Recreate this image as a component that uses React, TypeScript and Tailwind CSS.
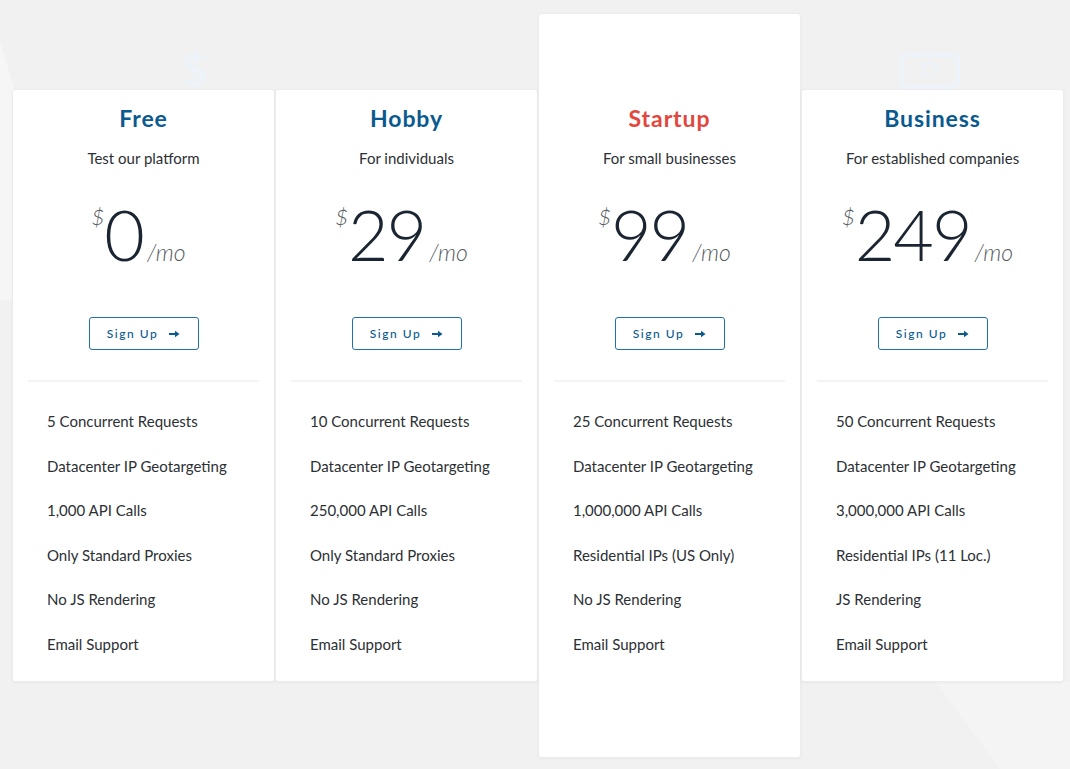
import React from "react";

type Plan = {
  name: string;
  sub: string;
  price: string;
  features: string[];
  featured?: boolean;
};

const plans: Plan[] = [
  {
    name: "Free",
    sub: "Test our platform",
    price: "0",
    features: [
      "5 Concurrent Requests",
      "Datacenter IP Geotargeting",
      "1,000 API Calls",
      "Only Standard Proxies",
      "No JS Rendering",
      "Email Support",
    ],
  },
  {
    name: "Hobby",
    sub: "For individuals",
    price: "29",
    features: [
      "10 Concurrent Requests",
      "Datacenter IP Geotargeting",
      "250,000 API Calls",
      "Only Standard Proxies",
      "No JS Rendering",
      "Email Support",
    ],
  },
  {
    name: "Startup",
    sub: "For small businesses",
    price: "99",
    featured: true,
    features: [
      "25 Concurrent Requests",
      "Datacenter IP Geotargeting",
      "1,000,000 API Calls",
      "Residential IPs (US Only)",
      "No JS Rendering",
      "Email Support",
    ],
  },
  {
    name: "Business",
    sub: "For established companies",
    price: "249",
    features: [
      "50 Concurrent Requests",
      "Datacenter IP Geotargeting",
      "3,000,000 API Calls",
      "Residential IPs (11 Loc.)",
      "JS Rendering",
      "Email Support",
    ],
  },
];

function Arrow() {
  return (
    <svg width="11" height="8" viewBox="0 0 11 8" className="ml-[11px]">
      <path d="M0 4 H7" stroke="#0b5a8f" strokeWidth="2" />
      <path d="M6 0.8 L10.5 4 L6 7.2 Z" fill="#0b5a8f" />
    </svg>
  );
}

function Card({ plan }: { plan: Plan }) {
  return (
    <div
      className={
        plan.featured
          ? "w-[263px] bg-white rounded-[3px] border border-[#ececec] shadow-[0_1px_3px_rgba(0,0,0,0.04)] pt-[90px] pb-[91px]"
          : "w-[263px] mt-[76px] bg-white rounded-[3px] border border-[#ececec] shadow-[0_1px_3px_rgba(0,0,0,0.04)] pt-[14px] pb-[15px]"
      }
    >
      <div className="flex flex-col items-center">
        <div
          className={
            plan.featured
              ? "text-[23px] leading-[28px] font-bold tracking-[0.9px] text-[#e2463d]"
              : "text-[23px] leading-[28px] font-bold tracking-[0.9px] text-[#0b5a8f]"
          }
        >
          {plan.name}
        </div>
        <div className="mt-[16px] text-[15px] leading-[20px] text-[#2c3034]">{plan.sub}</div>
        <div className="mt-[31px] h-[70px] flex items-baseline pr-[10px]">
          <span className="self-start mt-[7px] text-[22px] leading-[22px] italic font-light text-[#555b60]">
            $
          </span>
          <span className="text-[70px] leading-[70px] font-light text-[#1a2531] tracking-[-2px]">
            {plan.price}
          </span>
          <span className="ml-[4px] text-[23px] leading-[24px] italic font-light text-[#555b60]">
            /mo
          </span>
        </div>
        <button className="mt-[48px] w-[110px] h-[33px] flex items-center justify-center rounded-[3px] border border-[#1f72a6] text-[12px] tracking-[1.5px] text-[#0b5a8f] font-medium bg-white">
          Sign Up
          <Arrow />
        </button>
      </div>
      <div className="mx-[15px] mt-[30px] h-[2px] bg-[#f4f4f4]" />
      <ul className="mt-[17px] pl-[34px]">
        {plan.features.map((f) => (
          <li key={f} className="h-[44.5px] flex items-center text-[15px] text-[#2c3034]">
            {f}
          </li>
        ))}
      </ul>
    </div>
  );
}

export default function App() {
  return (
    <div
      className="relative w-full h-[769px] overflow-hidden bg-[#f1f1f1]"
      style={{ fontFamily: "Lato, 'Noto Sans', sans-serif" }}
    >
      <svg className="absolute inset-0" width="1070" height="769" viewBox="0 0 1070 769">
        <polygon points="0,40 0,300 30,300 60,250" fill="#f6f6f6" />
        <polygon points="1165,681 1330,769 1070,769 930,681" fill="#f3f3f3" opacity="0.6" />
        <polygon points="935,681 1000,769 1070,769 1070,681" fill="#f4f4f4" />
        <text x="182" y="86" fontSize="44" fill="#edf3f8" fontFamily="Lato, sans-serif" fontWeight="700">
          $
        </text>
        <rect x="902" y="55" width="56" height="32" rx="4" fill="none" stroke="#edf3f8" strokeWidth="5" />
        <circle cx="930" cy="70" r="7" fill="none" stroke="#edf3f8" strokeWidth="3" />
      </svg>
      <div className="relative flex items-start pt-[13px] pl-[12px]">
        {plans.map((p) => (
          <Card key={p.name} plan={p} />
        ))}
      </div>
    </div>
  );
}
